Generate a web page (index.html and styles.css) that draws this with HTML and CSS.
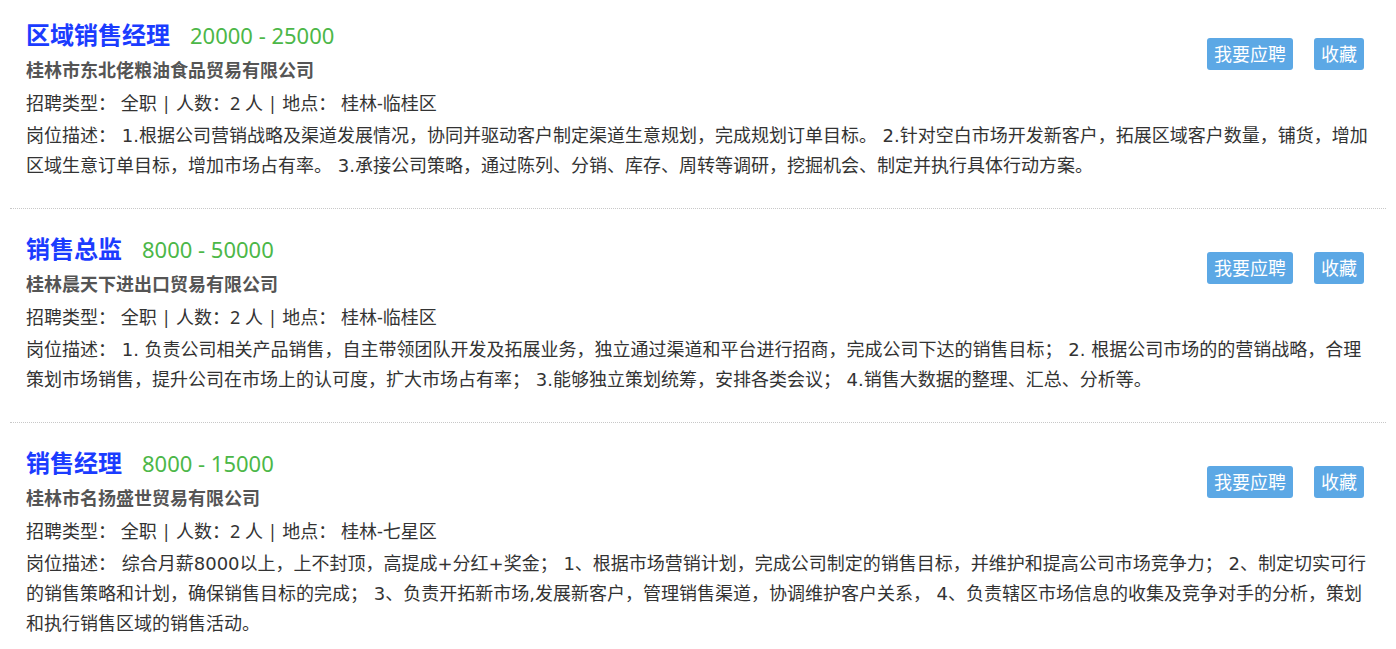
FILE: index.html
```html
<!DOCTYPE html>
<html lang="zh-CN">
<head>
<meta charset="utf-8">
<title>职位列表</title>
<link rel="stylesheet" href="styles.css">
</head>
<body>
<ul class="job-list">
  <li class="job">
    <div class="job-actions">
      <a class="btn" href="#">我要应聘</a>
      <a class="btn" href="#">收藏</a>
    </div>
    <div class="job-head">
      <a class="job-title" href="#">区域销售经理</a>
      <span class="job-salary">20000 - 25000</span>
    </div>
    <p class="job-company">桂林市东北佬粮油食品贸易有限公司</p>
    <p class="job-info">招聘类型： 全职 | 人数：2 人 | 地点： 桂林-临桂区</p>
    <p class="job-desc">岗位描述： 1.根据公司营销战略及渠道发展情况，协同并驱动客户制定渠道生意规划，完成规划订单目标。 2.针对空白市场开发新客户，拓展区域客户数量，铺货，增加区域生意订单目标，增加市场占有率。 3.承接公司策略，通过陈列、分销、库存、周转等调研，挖掘机会、制定并执行具体行动方案。</p>
  </li>
  <li class="job">
    <div class="job-actions">
      <a class="btn" href="#">我要应聘</a>
      <a class="btn" href="#">收藏</a>
    </div>
    <div class="job-head">
      <a class="job-title" href="#">销售总监</a>
      <span class="job-salary">8000 - 50000</span>
    </div>
    <p class="job-company">桂林晨天下进出口贸易有限公司</p>
    <p class="job-info">招聘类型： 全职 | 人数：2 人 | 地点： 桂林-临桂区</p>
    <p class="job-desc">岗位描述： 1. 负责公司相关产品销售，自主带领团队开发及拓展业务，独立通过渠道和平台进行招商，完成公司下达的销售目标； 2. 根据公司市场的的营销战略，合理策划市场销售，提升公司在市场上的认可度，扩大市场占有率； 3.能够独立策划统筹，安排各类会议； 4.销售大数据的整理、汇总、分析等。</p>
  </li>
  <li class="job">
    <div class="job-actions">
      <a class="btn" href="#">我要应聘</a>
      <a class="btn" href="#">收藏</a>
    </div>
    <div class="job-head">
      <a class="job-title" href="#">销售经理</a>
      <span class="job-salary">8000 - 15000</span>
    </div>
    <p class="job-company">桂林市名扬盛世贸易有限公司</p>
    <p class="job-info">招聘类型： 全职 | 人数：2 人 | 地点： 桂林-七星区</p>
    <p class="job-desc">岗位描述： 综合月薪8000以上，上不封顶，高提成+分红+奖金； 1、根据市场营销计划，完成公司制定的销售目标，并维护和提高公司市场竞争力； 2、制定切实可行的销售策略和计划，确保销售目标的完成； 3、负责开拓新市场,发展新客户，管理销售渠道，协调维护客户关系， 4、负责辖区市场信息的收集及竞争对手的分析，策划和执行销售区域的销售活动。</p>
  </li>
</ul>
</body>
</html>
```

FILE: styles.css
```css
html, body {
  margin: 0;
  padding: 0;
  background: #fff;
}

body {
  font-family: "Noto Sans", "Noto Sans CJK SC", sans-serif;
  color: #333;
  font-size: 18px;
}

.job-list {
  list-style: none;
  margin: 0 10px;
  padding: 0;
}

.job {
  padding: 22px 16px 27px;
  border-bottom: 1px dotted #c8c8c8;
}

.job:first-child {
  padding-top: 17px;
}

.job:last-child {
  border-bottom: none;
}

.job-actions {
  float: right;
  display: flex;
  gap: 21px;
  margin-top: 21px;
  margin-right: 6px;
}

.btn {
  display: block;
  height: 32px;
  line-height: 32px;
  padding: 0 7px;
  background: #5ca8e5;
  color: #fff;
  font-size: 18px;
  border-radius: 3px;
  text-decoration: none;
}

.job-head {
  display: flex;
  align-items: baseline;
  gap: 20px;
  height: 36px;
  line-height: 36px;
  margin-bottom: 2px;
}

.job-title {
  font-size: 24px;
  font-weight: bold;
  color: #1b3cff;
  text-decoration: none;
}

.job-salary {
  font-size: 22px;
  color: #4cb748;
}

.job-company,
.job-info,
.job-desc {
  margin: 0;
  line-height: 30px;
}

.job-company {
  font-weight: bold;
  color: #555;
}

.job-info,
.job-desc {
  margin-top: 3px;
}

.job-desc {
  font-family: "DejaVu Sans", "Noto Sans CJK SC", sans-serif;
}
```
